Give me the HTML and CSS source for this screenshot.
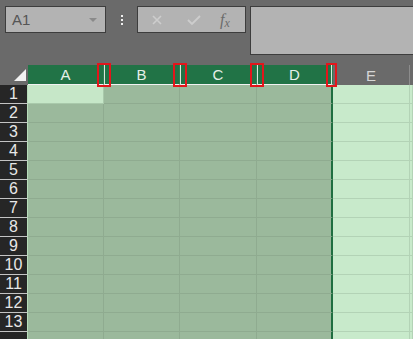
FILE: index.html
```html
<!DOCTYPE html>
<html lang="en">
<head>
  <meta charset="UTF-8">
  <title>Sheet</title>
  <link rel="stylesheet" href="styles.css">
</head>
<body>
  <!-- Barra de fórmulas -->
  <div class="toolbar">
    <div class="name-box">
      <span class="name-text">A1</span>
      <span class="name-arrow"></span>
    </div>
    <div class="dots"><i></i><i></i><i></i></div>
    <div class="fx-group">
      <svg class="btn-icon" width="12" height="12" viewBox="0 0 12 12"><path d="M2 2 L10 10 M10 2 L2 10" stroke="#cdcdcd" stroke-width="1.6" fill="none"/></svg>
      <svg class="btn-icon" width="16" height="12" viewBox="0 0 16 12"><path d="M2 6 L6 10 L14 2" stroke="#cdcdcd" stroke-width="1.8" fill="none"/></svg>
      <span class="fx">f<span class="fx-x">x</span></span>
    </div>
    <div class="formula-bar"></div>
  </div>

  <!-- Planilha -->
  <div class="sheet">
    <div class="corner"><span class="corner-tri"></span></div>
    <div class="col-head sel">A</div>
    <div class="col-head sel">B</div>
    <div class="col-head sel">C</div>
    <div class="col-head sel">D</div>
    <div class="col-head">E</div>
    <div class="col-head last"></div>

    <div class="row-head">1</div><div class="cell active"></div><div class="cell sel"></div><div class="cell sel"></div><div class="cell sel edge"></div><div class="cell"></div><div class="cell"></div>
    <div class="row-head">2</div><div class="cell sel"></div><div class="cell sel"></div><div class="cell sel"></div><div class="cell sel edge"></div><div class="cell"></div><div class="cell"></div>
    <div class="row-head">3</div><div class="cell sel"></div><div class="cell sel"></div><div class="cell sel"></div><div class="cell sel edge"></div><div class="cell"></div><div class="cell"></div>
    <div class="row-head">4</div><div class="cell sel"></div><div class="cell sel"></div><div class="cell sel"></div><div class="cell sel edge"></div><div class="cell"></div><div class="cell"></div>
    <div class="row-head">5</div><div class="cell sel"></div><div class="cell sel"></div><div class="cell sel"></div><div class="cell sel edge"></div><div class="cell"></div><div class="cell"></div>
    <div class="row-head">6</div><div class="cell sel"></div><div class="cell sel"></div><div class="cell sel"></div><div class="cell sel edge"></div><div class="cell"></div><div class="cell"></div>
    <div class="row-head">7</div><div class="cell sel"></div><div class="cell sel"></div><div class="cell sel"></div><div class="cell sel edge"></div><div class="cell"></div><div class="cell"></div>
    <div class="row-head">8</div><div class="cell sel"></div><div class="cell sel"></div><div class="cell sel"></div><div class="cell sel edge"></div><div class="cell"></div><div class="cell"></div>
    <div class="row-head">9</div><div class="cell sel"></div><div class="cell sel"></div><div class="cell sel"></div><div class="cell sel edge"></div><div class="cell"></div><div class="cell"></div>
    <div class="row-head">10</div><div class="cell sel"></div><div class="cell sel"></div><div class="cell sel"></div><div class="cell sel edge"></div><div class="cell"></div><div class="cell"></div>
    <div class="row-head">11</div><div class="cell sel"></div><div class="cell sel"></div><div class="cell sel"></div><div class="cell sel edge"></div><div class="cell"></div><div class="cell"></div>
    <div class="row-head">12</div><div class="cell sel"></div><div class="cell sel"></div><div class="cell sel"></div><div class="cell sel edge"></div><div class="cell"></div><div class="cell"></div>
    <div class="row-head">13</div><div class="cell sel"></div><div class="cell sel"></div><div class="cell sel"></div><div class="cell sel edge"></div><div class="cell"></div><div class="cell"></div>
    <div class="row-head"></div><div class="cell sel"></div><div class="cell sel"></div><div class="cell sel"></div><div class="cell sel edge"></div><div class="cell"></div><div class="cell"></div>

    <!-- Marcas vermelhas nas divisórias das colunas -->
    <div class="mark mark-ab"><i></i></div>
    <div class="mark mark-bc"><i></i></div>
    <div class="mark mark-cd"><i></i></div>
    <div class="mark mark-de"><i></i></div>
  </div>
</body>
</html>
```

FILE: styles.css
```css
* {
  box-sizing: border-box;
}

body {
  margin: 0;
  background: #6a6a6a;
  font-family: "Liberation Sans", Arial, sans-serif;
  overflow: hidden;
}

/* Barra superior */
.toolbar {
  height: 65px;
  display: flex;
  align-items: flex-start;
  padding: 6px 0 0 5px;
}

.name-box {
  width: 101px;
  height: 27px;
  background: #b3b3b3;
  border: 1px solid #3d3d3d;
  display: flex;
  align-items: center;
  justify-content: space-between;
  padding: 0 8px 0 6px;
}

.name-text {
  font-size: 15px;
  color: #555;
}

.name-arrow {
  width: 0;
  height: 0;
  border-style: solid;
  border-width: 4px 4px 0 4px;
  border-color: #8a8a8a transparent transparent transparent;
}

.dots {
  margin-left: 14px;
  width: 4px;
  height: 27px;
  display: flex;
  flex-direction: column;
  align-items: center;
  justify-content: center;
  gap: 2px;
}

.dots i {
  width: 2px;
  height: 2px;
  background: #f0f0f0;
}

.fx-group {
  margin-left: 13px;
  width: 109px;
  height: 27px;
  background: #b3b3b3;
  border: 1px solid #3d3d3d;
  display: flex;
  align-items: center;
  padding-left: 13px;
  gap: 23px;
}

.fx {
  font-family: "Liberation Serif", serif;
  font-style: italic;
  font-size: 16px;
  color: #6b6b6b;
  margin-left: -5px;
  line-height: 1;
}

.fx-x {
  font-size: 12px;
  position: relative;
  top: 2px;
}

.formula-bar {
  margin-left: 4px;
  flex: 1;
  height: 49px;
  background: #b3b3b3;
  border: 1px solid #3d3d3d;
  border-right: none;
}

/* Grade da planilha */
.sheet {
  position: relative;
  display: grid;
  grid-template-columns: 28px 76px 76px 77px 76px 77px 1fr;
  grid-template-rows: 20px;
  grid-auto-rows: 19px;
}

.corner {
  background: #6a6a6a;
  position: relative;
}

.corner-tri {
  position: absolute;
  right: 2px;
  bottom: 4px;
  width: 0;
  height: 0;
  border-style: solid;
  border-width: 0 0 12px 12px;
  border-color: transparent transparent #f2f2f2 transparent;
}

.col-head {
  display: flex;
  align-items: center;
  justify-content: center;
  font-size: 15px;
  color: #d6d6d6;
  background: #6a6a6a;
  border-right: 1px solid #8c8c8c;
}

.col-head.sel {
  background: #217346;
  color: #e6efe9;
  border-right: 1px solid #2d7f50;
  border-bottom: 1px solid #f2f2f2;
}

.col-head.last {
  border-right: none;
}

.row-head {
  background: #262626;
  color: #e8e8e8;
  font-size: 16px;
  display: flex;
  align-items: center;
  justify-content: center;
  border-bottom: 1px solid #c4c4c4;
  border-right: 1px solid #b7dcb9;
}

.cell {
  background: #c8eacb;
  border-right: 1px solid #b3d3b6;
  border-bottom: 1px solid #b3d3b6;
}

.cell.sel {
  background: #9bb99c;
  border-right: 1px solid #8fab90;
  border-bottom: 1px solid #8fab90;
}

.cell.active {
  background: #c6e7c8;
  border-right: 1px solid #a9c9ab;
  border-bottom: 1px solid #a9c9ab;
}

.cell.edge {
  border-right: 2px solid #1f6e40;
}

/* Marcas vermelhas */
.mark {
  position: absolute;
  top: -2px;
  width: 14px;
  height: 24px;
  border: 2px solid #e3151b;
  display: flex;
  justify-content: center;
}

.mark i {
  width: 1px;
  height: 100%;
  background: #d9e8dc;
}

.mark-ab { left: 97px; }
.mark-bc { left: 173px; }
.mark-cd { left: 250px; }
.mark-de { left: 326px; width: 11px; }
```
